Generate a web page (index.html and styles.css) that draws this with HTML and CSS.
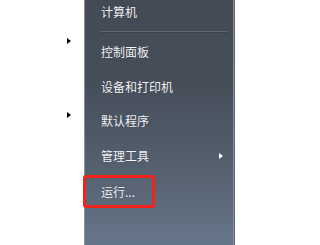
FILE: index.html
```html
<!DOCTYPE html>
<html>
<head>
<meta charset="utf-8">
<link rel="stylesheet" href="styles.css">
</head>
<body>
<div class="screen">
  <div class="programs">
    <div class="prog-row first"><span class="arrow-black"></span></div>
    <div class="prog-row second"><span class="arrow-black"></span></div>
  </div>
  <div class="panel">
    <div class="item first">计算机</div>
    <div class="sep"><div class="sep-line"></div></div>
    <div class="item">控制面板</div>
    <div class="item">设备和打印机</div>
    <div class="item">默认程序</div>
    <div class="item has-sub">管理工具<span class="arrow-white"></span></div>
    <div class="item run">运行...<span class="highlight"></span></div>
  </div>
</div>
</body>
</html>
```

FILE: styles.css
```css
html, body {
  margin: 0;
  padding: 0;
  background: #ffffff;
}
.screen {
  display: flex;
  width: 235px;
  height: 245px;
  overflow: hidden;
}
.programs {
  width: 84px;
  flex: none;
  display: flex;
  flex-direction: column;
  background: #ffffff;
}
.prog-row {
  display: flex;
  justify-content: flex-end;
  padding-right: 13px;
}
.prog-row.first {
  margin-top: 38px;
}
.prog-row.second {
  margin-top: 68px;
}
.arrow-black {
  width: 0;
  height: 0;
  border-top: 3.5px solid transparent;
  border-bottom: 3.5px solid transparent;
  border-left: 4px solid #000000;
}
.panel {
  flex: 1;
  display: flex;
  flex-direction: column;
  background: linear-gradient(180deg, #434a55 0%, #464e5a 35%, #56616f 70%, #66768a 100%);
  border-left: 1px solid #8a929c;
  box-shadow: inset -1px 0 0 #5c6572, inset -2px 0 0 #858e9a;
  font-family: "Noto Sans CJK SC", "Noto Sans", sans-serif;
  font-size: 12px;
  color: #f2f4f7;
  text-shadow: 0 0 1px rgba(0, 0, 0, 0.35);
}
.item {
  height: 34.5px;
  line-height: 34.5px;
  padding-left: 16px;
  padding-right: 12px;
  display: flex;
  align-items: center;
  justify-content: space-between;
  position: relative;
  white-space: nowrap;
}
.item.first {
  height: 24px;
  line-height: 24px;
}
.sep {
  height: 11px;
  padding-left: 16px;
  padding-right: 8px;
  box-sizing: border-box;
  padding-top: 7px;
}
.sep-line {
  height: 1px;
  background: #5f6772;
  border-bottom: 1px solid #3a414b;
}
.arrow-white {
  width: 0;
  height: 0;
  border-top: 3.5px solid transparent;
  border-bottom: 3.5px solid transparent;
  border-left: 4px solid #ffffff;
}
.run {
  padding-top: 2px;
}
.highlight {
  position: absolute;
  left: -2px;
  top: 1.5px;
  width: 72px;
  height: 33px;
  box-sizing: border-box;
  border: 3px solid #f4221a;
  border-radius: 3px;
}
```
